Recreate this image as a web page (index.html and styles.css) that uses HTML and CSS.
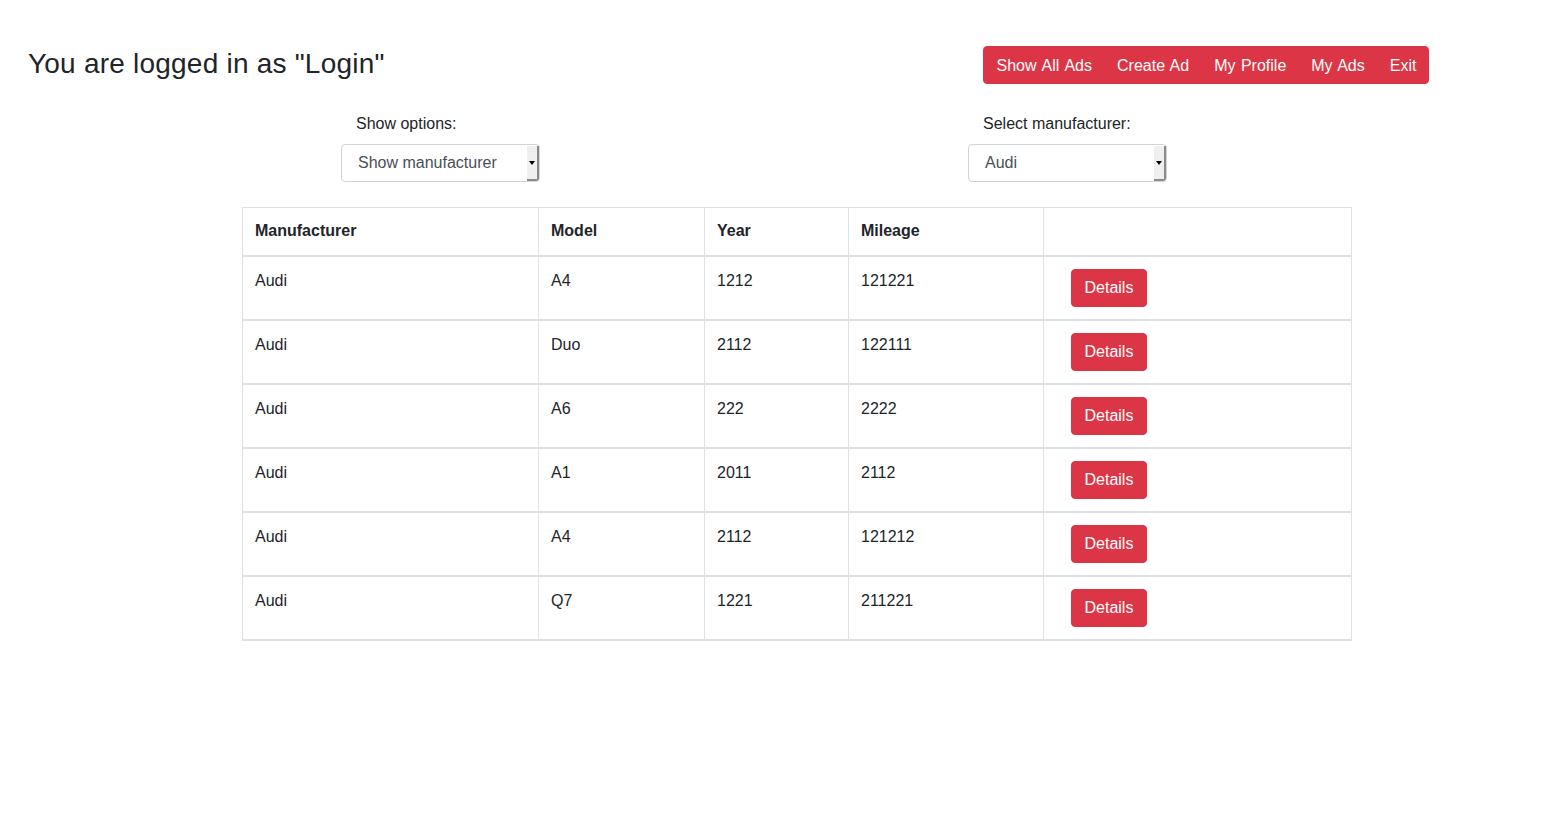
FILE: index.html
```html
<!DOCTYPE html>
<html lang="en">
<head>
<meta charset="utf-8">
<title>Ads</title>
<link rel="stylesheet" href="styles.css">
</head>
<body>
<header class="topbar">
  <h3 class="title">You are logged in as "Login"</h3>
  <nav class="nav">
    <a class="nav-link" href="#">Show All Ads</a><a class="nav-link" href="#">Create Ad</a><a class="nav-link" href="#">My Profile</a><a class="nav-link" href="#">My Ads</a><a class="nav-link" href="#">Exit</a>
  </nav>
</header>

<section class="filters">
  <div class="filter">
    <label class="filter-label">Show options:</label>
    <div class="select select-wide"><span class="select-value">Show manufacturer</span><span class="select-btn"><span class="caret"></span></span></div>
  </div>
  <div class="filter">
    <label class="filter-label">Select manufacturer:</label>
    <div class="select"><span class="select-value">Audi</span><span class="select-btn"><span class="caret"></span></span></div>
  </div>
</section>

<table class="ads">
  <colgroup>
    <col class="c1"><col class="c2"><col class="c3"><col class="c4"><col class="c5">
  </colgroup>
  <thead>
    <tr><th>Manufacturer</th><th>Model</th><th>Year</th><th>Mileage</th><th></th></tr>
  </thead>
  <tbody>
    <tr><td>Audi</td><td>A4</td><td>1212</td><td>121221</td><td><a class="btn" href="#">Details</a></td></tr>
    <tr><td>Audi</td><td>Duo</td><td>2112</td><td>122111</td><td><a class="btn" href="#">Details</a></td></tr>
    <tr><td>Audi</td><td>A6</td><td>222</td><td>2222</td><td><a class="btn" href="#">Details</a></td></tr>
    <tr><td>Audi</td><td>A1</td><td>2011</td><td>2112</td><td><a class="btn" href="#">Details</a></td></tr>
    <tr><td>Audi</td><td>A4</td><td>2112</td><td>121212</td><td><a class="btn" href="#">Details</a></td></tr>
    <tr><td>Audi</td><td>Q7</td><td>1221</td><td>211221</td><td><a class="btn" href="#">Details</a></td></tr>
  </tbody>
</table>
</body>
</html>
```

FILE: styles.css
```css
* { box-sizing: border-box; }
html, body {
  margin: 0;
  padding: 0;
  background: #fff;
  font-family: "Liberation Sans", Arial, sans-serif;
  font-size: 16px;
  line-height: 1.5;
  color: #212529;
}

.topbar {
  display: grid;
  grid-template-columns: 955px auto;
  align-items: start;
  padding: 46px 0 0 28px;
}
.title {
  margin: 1px 0 0;
  font-size: 28px;
  font-weight: 400;
  line-height: 1.2;
  letter-spacing: 0.22px;
}
.nav {
  display: flex;
  justify-self: start;
  background: #dc3545;
  border: 1px solid #dc3545;
  border-radius: 4px;
  padding: 0;
}
.nav-link {
  color: #fff;
  text-decoration: none;
  padding: 7px 12.5px 5px;
  line-height: 24px;
  word-spacing: 1px;
}
.nav-link:first-child { word-spacing: 1.5px; }
.nav-link:last-child { padding-right: 12px; }

.filters {
  display: grid;
  grid-template-columns: 627px auto;
  padding: 28px 0 0 341px;
}
.filter { display: flex; flex-direction: column; align-items: flex-start; }
.filter-label {
  margin: 0 0 8px 15px;
  line-height: 24px;
}
.select {
  position: relative;
  display: flex;
  align-items: center;
  width: 199px;
  height: 38px;
  border: 1px solid #ced4da;
  border-radius: 4px;
  background: #fff;
  color: #495057;
  padding-left: 16px;
}
.select-value { flex: 1; line-height: 24px; }
.select-btn {
  align-self: stretch;
  width: 12px;
  margin: 1px 0 0 0;
  background: #efefef;
  border-right: 2px solid #8a8a8a;
  border-bottom: 2px solid #8a8a8a;
  border-bottom-right-radius: 3px;
  display: flex;
  align-items: center;
  justify-content: center;
}
.caret {
  width: 0;
  height: 0;
  border-left: 3px solid transparent;
  border-right: 3px solid transparent;
  border-top: 4px solid #000;
}

.ads {
  margin: 25px 0 0 242px;
  width: 1109px;
  table-layout: fixed;
  border-collapse: collapse;
}
.c1 { width: 296px; }
.c2 { width: 166px; }
.c3 { width: 144px; }
.c4 { width: 195px; }
.c5 { width: 308px; }
.ads th, .ads td {
  text-align: left;
  vertical-align: top;
  padding: 12px;
  line-height: 24px;
  border-left: 1px solid #dee2e6;
  border-right: 1px solid #dee2e6;
  border-top: 2px solid #dee2e6;
  border-bottom: 2px solid #dee2e6;
}
.ads thead th {
  font-weight: 700;
  border-top: 1px solid #dee2e6;
  padding: 11px 12px 12px;
}
.ads td { padding-top: 12px; }
.btn {
  display: inline-block;
  margin: 0 0 0 15px;
  padding: 6px 12.5px;
  line-height: 24px;
  border: 1px solid #dc3545;
  border-radius: 4px;
  background: #dc3545;
  color: #fff;
  text-decoration: none;
}
```
